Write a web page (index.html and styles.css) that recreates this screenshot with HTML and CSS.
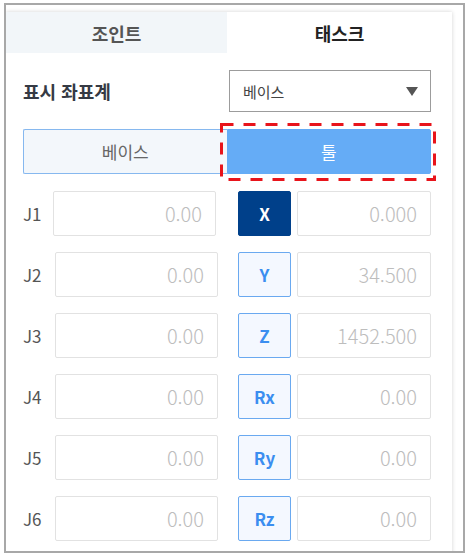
FILE: index.html
```html
<!DOCTYPE html>
<html lang="ko">
<head>
<meta charset="utf-8">
<link rel="stylesheet" href="styles.css">
</head>
<body>
<div class="frame">
  <div class="panel">
    <div class="tabs">
      <div class="tab">조인트</div>
      <div class="tab tab-active">태스크</div>
    </div>
    <div class="content">
      <div class="coord-row">
        <div class="coord-label">표시 좌표계</div>
        <div class="select">
          <span>베이스</span>
          <svg class="caret" width="12" height="9" viewBox="0 0 12 9"><polygon points="0,0 12,0 6,9" fill="#555"/></svg>
        </div>
      </div>
      <div class="toggle">
        <div class="toggle-btn">베이스</div>
        <div class="toggle-btn toggle-on">툴</div>
        <svg class="highlight" width="216" height="58" viewBox="0 0 216 58"><rect x="1.5" y="1.5" width="213" height="55" fill="none" stroke="#e8141b" stroke-width="3" stroke-dasharray="12 10"/></svg>
      </div>
      <div class="rows">
        <div class="row">
          <div class="joint"><span class="jl jl-narrow">J1</span><div class="field">0.00</div></div>
          <div class="axis axis-on">X</div>
          <div class="field field-wide">0.000</div>
        </div>
        <div class="row">
          <div class="joint"><span class="jl">J2</span><div class="field">0.00</div></div>
          <div class="axis">Y</div>
          <div class="field field-wide">34.500</div>
        </div>
        <div class="row">
          <div class="joint"><span class="jl">J3</span><div class="field">0.00</div></div>
          <div class="axis">Z</div>
          <div class="field field-wide">1452.500</div>
        </div>
        <div class="row">
          <div class="joint"><span class="jl">J4</span><div class="field">0.00</div></div>
          <div class="axis">Rx</div>
          <div class="field field-wide">0.00</div>
        </div>
        <div class="row">
          <div class="joint"><span class="jl">J5</span><div class="field">0.00</div></div>
          <div class="axis">Ry</div>
          <div class="field field-wide">0.00</div>
        </div>
        <div class="row">
          <div class="joint"><span class="jl">J6</span><div class="field">0.00</div></div>
          <div class="axis">Rz</div>
          <div class="field field-wide">0.00</div>
        </div>
      </div>
    </div>
  </div>
</div>
</body>
</html>
```
FILE: styles.css
```css
* { box-sizing: border-box; }
html, body { margin: 0; padding: 0; background: #fff; }
body { font-family: "Noto Sans CJK KR", "Noto Sans", sans-serif; }

.frame {
  margin: 3px 0 0 4px;
  width: 461px;
  height: 550px;
  border: 2px solid #a8a8a8;
  overflow: hidden;
  background: #fff;
}

.panel {
  margin-top: 7px;
  width: 446px;
  height: 600px;
  background: #fff;
  box-shadow: 0 0 4px rgba(0, 0, 0, 0.18);
}

.tabs { display: flex; height: 41px; }
.tab {
  width: 221px;
  background: #f2f6f9;
  color: #555;
  font-weight: 700;
  font-size: 18px;
  display: flex;
  align-items: center;
  justify-content: center;
}
.tab-active { flex: 1; background: #fff; color: #222; }

.content { padding: 17px 21px 0 17px; }

.coord-row { display: flex; align-items: center; justify-content: space-between; }
.coord-label { font-size: 18px; font-weight: 700; color: #353a44; }
.select {
  width: 202px;
  height: 42px;
  border: 1px solid #9c9c9c;
  display: flex;
  align-items: center;
  justify-content: space-between;
  padding: 0 12px 0 13px;
  font-size: 15px;
  color: #444;
}
.caret { display: block; }

.toggle { position: relative; display: flex; margin-top: 17px; height: 45px; }
.toggle-btn {
  flex: 1;
  display: flex;
  align-items: center;
  justify-content: center;
  font-size: 17px;
  color: #666;
  background: #f3f7fb;
  border: 1px solid #86b8ef;
  border-right: none;
  border-radius: 2px 0 0 2px;
}
.toggle-on { background: #65acf6; color: #fff; border: 1px solid #65acf6; border-radius: 0 2px 2px 0; }
.highlight { position: absolute; left: 197px; top: -6px; }

.rows { margin-top: 17px; display: flex; flex-direction: column; gap: 16px; }
.row { display: flex; height: 45px; align-items: stretch; }
.joint { width: 215px; display: flex; align-items: center; }
.jl { font-size: 17px; color: #555; width: 32px; }
.jl-narrow { width: 30px; }
.field {
  height: 45px;
  width: 163px;
  border: 1px solid #e2e2e2;
  border-radius: 2px;
  display: flex;
  align-items: center;
  justify-content: flex-end;
  padding-right: 13px;
  font-size: 20px;
  font-weight: 300;
  color: #bdbdbd;
}
.field-wide { width: auto; flex: 1; }
.axis {
  width: 53px;
  margin-right: 6px;
  border: 1px solid #6aa9f0;
  border-radius: 2px;
  background: #f4f8ff;
  color: #3b8ef0;
  font-size: 17px;
  font-weight: 700;
  display: flex;
  align-items: center;
  justify-content: center;
}
.axis-on { background: #00408a; border-color: #00408a; color: #fff; }
```
